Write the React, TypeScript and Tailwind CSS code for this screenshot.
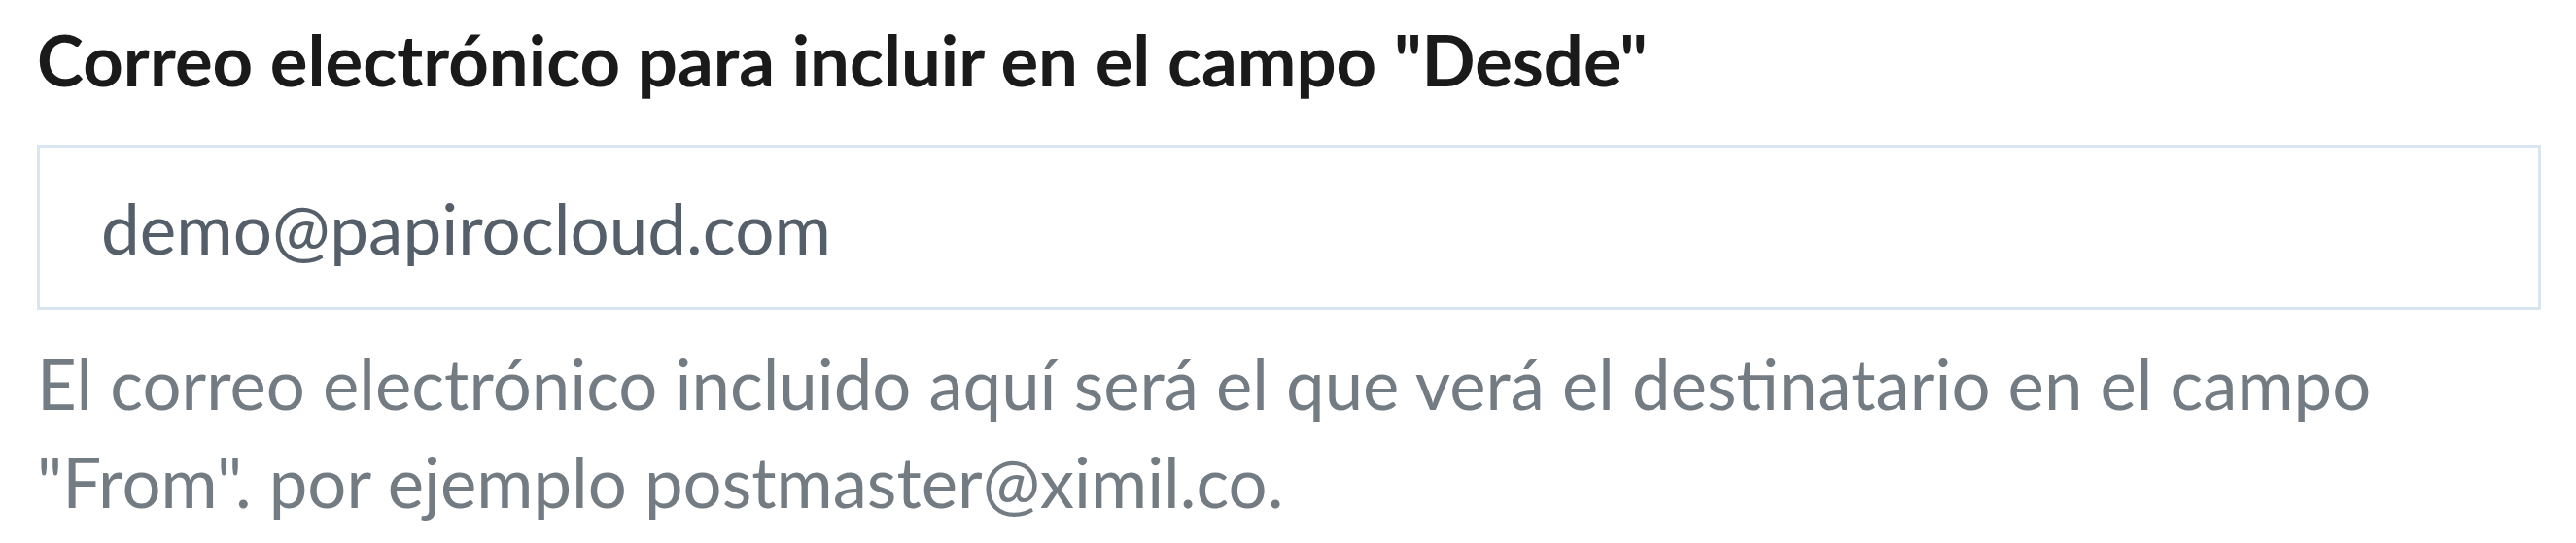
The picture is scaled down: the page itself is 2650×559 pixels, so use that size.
import React from 'react';

export default function App() {
  return (
    <div className="w-full bg-white pl-[38px] pr-[36px] pt-[17px] font-['Lato',sans-serif]">
      <label htmlFor="from-email" className="block text-[72.5px] font-bold leading-[1.2] text-[#1a1a1a]">
        Correo electrónico para incluir en el campo "Desde"
      </label>
      <div className="mt-[45px] h-[170px] border-[3px] border-[#d9e5f0] bg-white">
        <input
          id="from-email"
          readOnly
          value="demo@papirocloud.com"
          className="h-full w-full bg-transparent pl-[63px] text-[71px] text-[#555f69] outline-none"
        />
      </div>
      <p className="mt-[25px] text-[70.7px] leading-[101px] text-[#737b83]">
        El correo electrónico incluido aquí será el que verá el destinatario en el campo "From". por ejemplo postmaster@ximil.co.
      </p>
    </div>
  );
}
